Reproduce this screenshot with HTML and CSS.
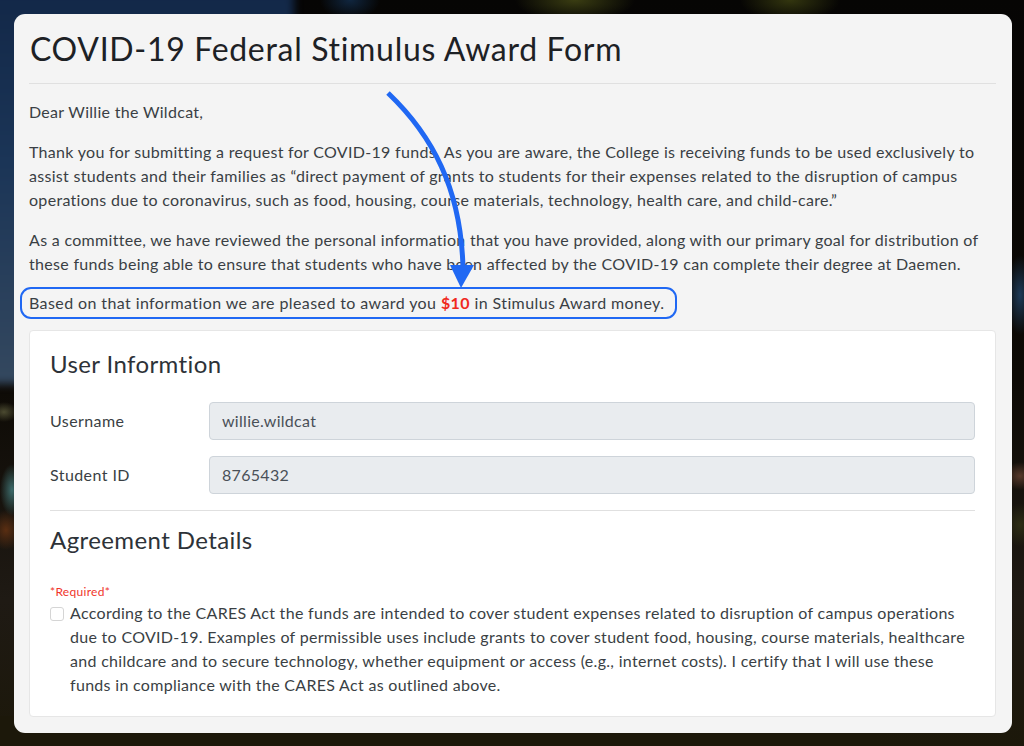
FILE: index.html
```html
<!DOCTYPE html>
<html lang="en">
<head>
<meta charset="utf-8">
<title>COVID-19 Federal Stimulus Award Form</title>
<link rel="stylesheet" href="styles.css">
</head>
<body>
<div class="bg"><div class="sky"></div></div>
<main class="panel">
	<h1>COVID-19 Federal Stimulus Award Form</h1>
	<hr>
	<p>Dear Willie the Wildcat,</p>
	<p>Thank you for submitting a request for COVID-19 funds. As you are aware, the College is receiving funds to be used exclusively to<br>
	assist students and their families as “direct payment of grants to students for their expenses related to the disruption of campus<br>
	operations due to coronavirus, such as food, housing, course materials, technology, health care, and child-care.”</p>
	<p>As a committee, we have reviewed the personal information that you have provided, along with our primary goal for distribution of<br>
	these funds being able to ensure that students who have been affected by the COVID-19 can complete their degree at Daemen.</p>
	<p class="award">Based on that information we are pleased to award you <b>$10</b> in Stimulus Award money.</p>
	<section class="card">
		<h2>User Informtion</h2>
		<div class="row">
			<label for="username">Username</label>
			<input id="username" type="text" value="willie.wildcat" disabled>
		</div>
		<div class="row">
			<label for="student">Student ID</label>
			<input id="student" type="text" value="8765432" disabled>
		</div>
		<hr>
		<h2>Agreement Details</h2>
		<div class="required">*Required*</div>
		<label class="check">
			<input type="checkbox"><i></i>
			<span>According to the CARES Act the funds are intended to cover student expenses related to disruption of campus operations<br>
			due to COVID-19. Examples of permissible uses include grants to cover student food, housing, course materials, healthcare<br>
			and childcare and to secure technology, whether equipment or access (e.g., internet costs). I certify that I will use these<br>
			funds in compliance with the CARES Act as outlined above.</span>
		</label>
	</section>
</main>
<div class="highlight"></div>
<svg class="arrow" width="1024" height="746" viewBox="0 0 1024 746">
	<path d="M388 93 C432 135 461 188 463 268" fill="none" stroke="#2068f3" stroke-width="5"/>
	<polygon points="450,265 474,265 461,288" fill="#2068f3"/>
</svg>
</body>
</html>
```
FILE: styles.css
```css
*{box-sizing: border-box;}
html, body{height: 100%;}
body{
	margin: 0;
	padding: 14px 12px 13px 14px;
	font-family: 'Lato', 'Noto Sans', sans-serif;
	font-size: 16px;
	letter-spacing: .3px;
	color: #3a3f44;
	background: #060504;
	overflow: hidden;
}
.bg{
	position: absolute;
	top: 0; left: 0; right: 0; bottom: 0;
	overflow: hidden;
	background:
		radial-gradient(ellipse 60px 22px at 575px 0, #3a3d12, transparent),
		radial-gradient(ellipse 50px 22px at 790px 0, #33360f, transparent),
		radial-gradient(ellipse 30px 20px at 350px 0, #10263f, transparent),
		radial-gradient(ellipse 14px 40px at 1020px 295px, #1d3a58, transparent),
		radial-gradient(ellipse 16px 14px at 1020px 476px, #57392b, transparent),
		radial-gradient(ellipse 16px 22px at 1020px 525px, #2d2d14, transparent),
		radial-gradient(ellipse 14px 10px at 4px 412px, #4b4a30, transparent),
		radial-gradient(ellipse 12px 26px at 12px 490px, #3c6a6a, transparent),
		radial-gradient(ellipse 16px 20px at 6px 530px, #5a2e12, transparent),
		linear-gradient(90deg, rgba(28,24,10,1) 0, rgba(28,24,10,1) 85%, rgba(10,8,4,0) 96%) left bottom / 100% 30px no-repeat,
		linear-gradient(180deg, #060504 0, #0d0a05 380px, #1f1a14 600px, #1c180a 100%);
}
.sky{
	position: absolute;
	left: -20px; top: -20px;
	width: 314px; height: 404px;
	background: linear-gradient(180deg, #122747 0, #1b3557 45%, #34485f 100%);
	filter: blur(4px);
}
.panel{
	position: relative;
	height: 719px;
	padding: 15px 16px 0 15px;
	background: #f4f4f4;
	border-radius: 11px;
}
h1{
	margin: 0;
	padding-left: 1px;
	font-size: 32px;
	font-weight: 400;
	line-height: 40px;
	letter-spacing: .69px;
	color: #1d2125;
}
h2{
	margin: 0;
	font-size: 24px;
	font-weight: 400;
	line-height: 29px;
	letter-spacing: .4px;
	color: #2d3238;
}
hr{
	margin: 14px 0 16px;
	border: 0;
	border-top: 1px solid #e0e0e0;
}
p{
	margin: 0 0 16px;
	line-height: 24px;
}
.award{
	margin: -1px 0 15px;
	letter-spacing: .4px;
}
.award b{color: #f02a1e;}
.card{
	background: #fff;
	border: 1px solid #e6e6e6;
	border-radius: 4px;
	padding: 18px 20px 0;
	height: 387px;
}
.card h2{margin-bottom: 24px;}
.row{
	display: flex;
	align-items: center;
	margin-bottom: 16px;
	letter-spacing: .42px;
}
.row label{
	width: 159px;
	padding-bottom: 2px;
}
.row input{
	flex: 1;
	height: 38px;
	padding: 5px 12px 7px;
	border: 1px solid #ced4da;
	border-radius: 4px;
	background: #e9ecef;
	color: #495057;
	font: inherit;
	letter-spacing: .3px;
}
.card hr{margin: 16px 0 14px;}
.card hr + h2{margin-bottom: 0;}
.required{
	margin-top: 29px;
	font-size: 12px;
	line-height: 18px;
	color: #f0352b;
}
.check{
	display: flex;
	line-height: 24px;
}
.check input{
	position: absolute; top: -90px;
}
.check i{
	flex: none;
	width: 14px;
	height: 14px;
	margin: 6px 6px 0 0;
	border: 1px solid #d5d5d5;
	border-radius: 3px;
	background: #fff;
}
.highlight{
	position: absolute;
	left: 20px; top: 287px;
	width: 657px; height: 32px;
	border: 2px solid #2068f3;
	border-radius: 11px;
}
.arrow{
	position: absolute;
	top: 0; left: 0;
}
```
